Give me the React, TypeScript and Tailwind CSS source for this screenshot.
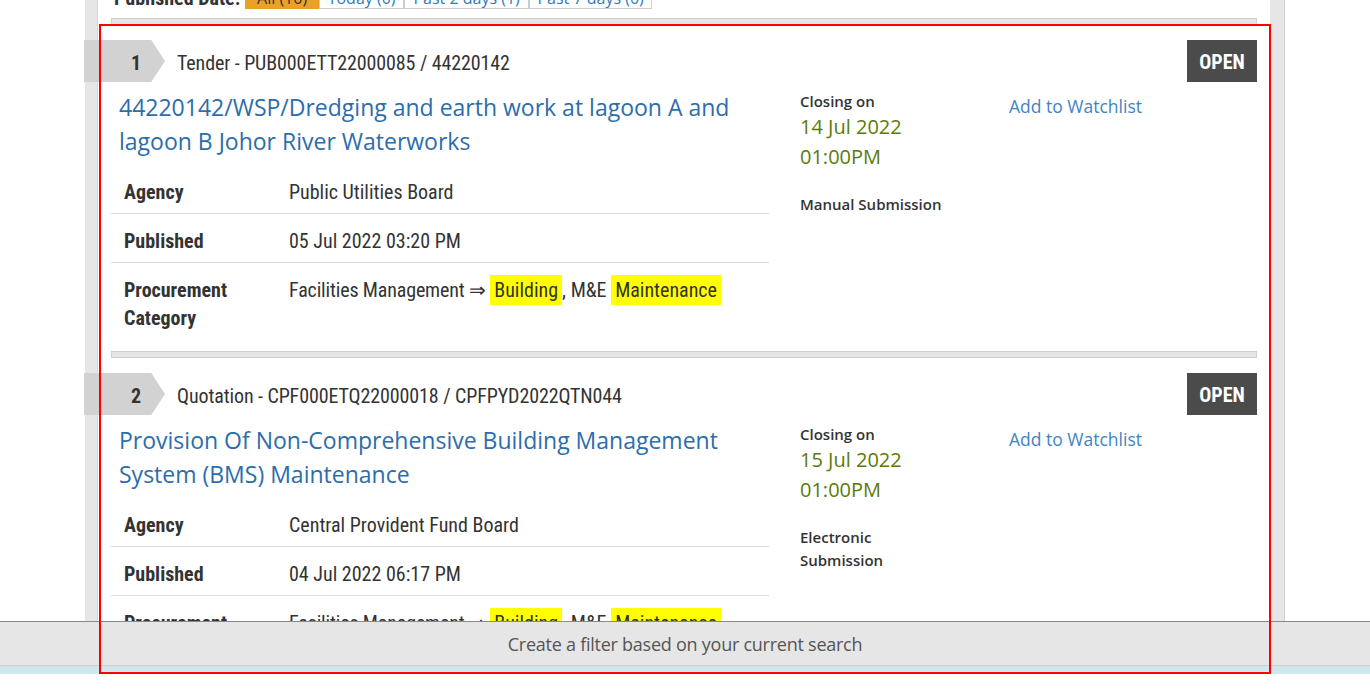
import React from "react";

type Notice = {
  no: number;
  ref: string;
  title: string[];
  agency: string;
  published: string;
  closeDate: string;
  closeTime: string;
  submission: string;
};

const notices: Notice[] = [
  {
    no: 1,
    ref: "Tender - PUB000ETT22000085 / 44220142",
    title: ["44220142/WSP/Dredging and earth work at lagoon A and", "lagoon B Johor River Waterworks"],
    agency: "Public Utilities Board",
    published: "05 Jul 2022 03:20 PM",
    closeDate: "14 Jul 2022",
    closeTime: "01:00PM",
    submission: "Manual Submission",
  },
  {
    no: 2,
    ref: "Quotation - CPF000ETQ22000018 / CPFPYD2022QTN044",
    title: ["Provision Of Non-Comprehensive Building Management", "System (BMS) Maintenance"],
    agency: "Central Provident Fund Board",
    published: "04 Jul 2022 06:17 PM",
    closeDate: "15 Jul 2022",
    closeTime: "01:00PM",
    submission: "Electronic Submission",
  },
];

// Roboto's condensed face stands in for Roboto Condensed
const cond = "font-['Roboto',sans-serif] [font-stretch:condensed]";
const open = "font-['Open_Sans',sans-serif]";

function Row({ label, children, last }: { label: React.ReactNode; children: React.ReactNode; last?: boolean }) {
  return (
    <div className={`flex pt-[13px] pb-[7px] leading-[28px] ${last ? "" : "border-b border-[#ddd]"}`}>
      <div className="w-[178px] shrink-0 pl-[13px] font-bold text-[#333]">{label}</div>
      <div className="text-[#333]">{children}</div>
    </div>
  );
}

function Item({ n }: { n: Notice }) {
  return (
    <div className="pt-[15px]">
      {/* header */}
      <div className="flex h-[42px] items-center">
        <div className="-ml-[27px] flex h-[42px] w-[81px] items-center bg-[#d2d2d2] pl-[47px] pt-[3px] text-[20px] font-bold text-[#333] [clip-path:polygon(0_0,83%_0,100%_50%,83%_100%,0_100%)]">
          <span className={cond}>{n.no}</span>
        </div>
        <div className={`ml-[12px] pt-[3px] text-[20px] tracking-[-0.1px] text-[#333] ${cond}`}>{n.ref}</div>
        <div className={`ml-auto flex h-[42px] w-[70px] items-center justify-center bg-[#4b4b4b] pt-[2px] text-[20px] font-bold text-white ${cond}`}>
          OPEN
        </div>
      </div>

      <div className="mt-[8px] flex">
        <div className="w-[658px] shrink-0">
          <a className={`block pl-[8px] text-[23px] leading-[34px] text-[#2c6dab] ${open}`}>
            {n.title.map((t) => (
              <div key={t}>{t}</div>
            ))}
          </a>
          <div className={`mt-[7px] text-[20px] ${cond}`}>
            <Row label="Agency">{n.agency}</Row>
            <Row label="Published">{n.published}</Row>
            <Row
              last
              label={
                <>
                  Procurement
                  <br />
                  Category
                </>
              }
            >
              <span className="tracking-[-0.15px]">Facilities Management ⇒ </span>
              <span className="bg-[#ffff00] px-[4px] py-[3px]">Building</span>, M&amp;E{" "}
              <span className="bg-[#ffff00] px-[4px] py-[3px]">Maintenance</span>
            </Row>
          </div>
        </div>

        <div className={`ml-[31px] w-[150px] shrink-0 ${open}`}>
          <div className="text-[15px] font-semibold leading-[22px] text-[#333]">Closing on</div>
          <div className="text-[20px] leading-[30px] text-[#5b7b08]">{n.closeDate}</div>
          <div className="text-[20px] leading-[30px] text-[#5b7b08]">{n.closeTime}</div>
          <div className="mt-[21px] text-[15px] font-semibold leading-[23px] text-[#333]">{n.submission}</div>
        </div>

        <div className={`ml-[59px] mt-[3px] text-[17.5px] leading-[26px] text-[#3f84c5] ${open}`}>Add to Watchlist</div>
      </div>
    </div>
  );
}

export default function App() {
  const tabs = [
    { t: "All (10)", w: "w-[74px]", on: true },
    { t: "Today (0)", w: "w-[85px]" },
    { t: "Past 2 days (1)", w: "w-[125px]" },
    { t: "Past 7 days (0)", w: "w-[123px]" },
  ];

  return (
    <div className="bg-white">
      <div className="relative h-[674px] overflow-hidden bg-white">
        <div className="ml-[85px] h-full w-[1200px] border-r border-[#d0d0d0] bg-[#e6e6e6] pl-[12px] pr-[14px]">
          <div className="h-full border-l border-[#d6d6d6] bg-white px-[13px]">
            {/* published date filter (scrolled partly out of view) */}
            <div className="-mt-[21px] flex h-[30px] items-stretch pl-[3px]">
              <span className={`mr-[5px] flex items-center pt-[8px] text-[20px] font-bold text-[#333] ${cond}`}>Published Date:</span>
              {tabs.map((tab) => (
                <span
                  key={tab.t}
                  className={`flex ${tab.w} items-center justify-center border pt-[8px] text-[16px] ${open} ${
                    tab.on ? "border-[#e8a125] bg-[#e9a227] text-[#333]" : "border-[#ccc] bg-white text-[#337ab7]"
                  }`}
                >
                  {tab.t}
                </span>
              ))}
            </div>

            <div className="mt-[9px] h-[7px] border border-[#cfcfcf] bg-[#e6e6e6]" />

            <Item n={notices[0]} />
            <div className="mt-[12px] h-[7px] border border-[#cfcfcf] bg-[#e6e6e6]" />
            <Item n={notices[1]} />
          </div>
        </div>

        {/* fixed footer */}
        <div className="absolute left-0 top-[621px] w-full">
          <div className={`flex h-[44px] items-center justify-center border-t border-[#8a8a8a] bg-[#e6e6e6] pt-[2px] text-[18px] tracking-[-0.25px] text-[#555] ${open}`}>
            Create a filter based on your current search
          </div>
          <div className="h-[9px] border-t border-[#cfcfcf] bg-[#cfe8ee]" />
        </div>

        {/* red annotation box */}
        <div className="pointer-events-none absolute left-[99px] top-[24px] h-[650px] w-[1172px] border-2 border-[#ff0000]" />
      </div>
    </div>
  );
}
